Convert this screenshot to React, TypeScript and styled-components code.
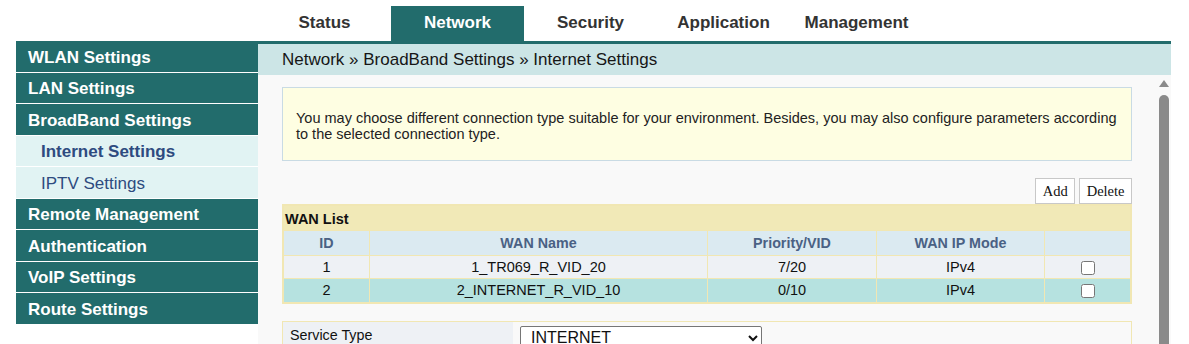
import React from "react";
import styled, { createGlobalStyle } from "styled-components";

const Global = createGlobalStyle`
  html, body { margin: 0; padding: 0; overflow: hidden; background: #fff; }
  body { font-family: "Liberation Sans", Arial, sans-serif; }
  * { box-sizing: border-box; }
`;

const TEAL = "#226c6c";

const Page = styled.div`
  width: 1189px;
  height: 344px;
  overflow: hidden;
  display: flex;
  flex-direction: column;
`;

const TopBar = styled.div`
  display: flex;
  flex: none;
  height: 41px;
  padding: 6px 0 0 258px;
`;

const Tab = styled.div<{ $active?: boolean }>`
  width: 133px;
  height: 35px;
  display: flex;
  align-items: center;
  justify-content: center;
  padding-bottom: 1px;
  font-size: 17px;
  font-weight: bold;
  color: ${(p) => (p.$active ? "#fff" : "#333")};
  background: ${(p) => (p.$active ? TEAL : "transparent")};
`;

const Body = styled.div`
  flex: 1;
  display: flex;
  padding: 0 18px 0 16px;
  min-height: 0;
`;

const Sidebar = styled.div`
  width: 242px;
  flex: none;
  display: flex;
  flex-direction: column;
  gap: 1px;
`;

const NavItem = styled.div<{ $sub?: boolean; $active?: boolean }>`
  height: 30.5px;
  flex: none;
  display: flex;
  align-items: center;
  padding-top: 3px;
  font-size: 17px;
  padding-left: ${(p) => (p.$sub ? "25px" : "12px")};
  font-weight: ${(p) => (p.$sub && !p.$active ? "normal" : "bold")};
  background: ${(p) => (p.$sub ? "#e1f3f3" : TEAL)};
  color: ${(p) => (p.$sub ? "#2e4b80" : "#fff")};
`;

const Content = styled.div`
  flex: 1;
  display: flex;
  flex-direction: column;
  background: #f9f9f9;
  border-top: 3px solid ${TEAL};
  min-width: 0;
`;

const Breadcrumb = styled.div`
  height: 31px;
  flex: none;
  display: flex;
  align-items: center;
  padding-left: 24px;
  background: #cce5e6;
  font-size: 17px;
  color: #161616;
`;

const ScrollArea = styled.div`
  flex: 1;
  display: flex;
  min-height: 0;
  overflow: hidden;
`;

const Inner = styled.div`
  flex: 1;
  padding: 12px 24px 0 24px;
`;

const Track = styled.div`
  width: 16px;
  flex: none;
  display: flex;
  flex-direction: column;
  align-items: flex-start;
  padding: 5px 0 0 3px;
`;

const Arrow = styled.div`
  width: 0;
  height: 0;
  border-left: 5.5px solid transparent;
  border-right: 5.5px solid transparent;
  border-bottom: 7px solid #8a8a8a;
`;

const Thumb = styled.div`
  margin-top: 8px;
  width: 10px;
  flex: 1;
  background: #8a8a8a;
  border-radius: 5px 5px 0 0;
`;

const InfoBox = styled.div`
  height: 74px;
  border: 1px solid #c9dbe4;
  background: #fefee2;
  padding: 22px 13px 0 13px;
  font-size: 14.5px;
  line-height: 16px;
  color: #222;
`;

const ButtonRow = styled.div`
  display: flex;
  justify-content: flex-end;
  gap: 4px;
  margin-top: 17px;
`;

const Btn = styled.button`
  height: 26px;
  padding: 0 6.5px;
  border: 1px solid #c8c8c8;
  background: #fff;
  font-family: "Liberation Serif", "Times New Roman", serif;
  font-size: 14.5px;
  color: #111;
  border-radius: 0;
`;

const Table = styled.table`
  width: 849px;
  border-collapse: separate;
  border-spacing: 1px;
  padding: 1px;
  background: #f1e7b3;
  font-size: 14.5px;
  table-layout: fixed;
`;

const TitleCell = styled.td`
  height: 24px;
  padding: 1px 1px 0;
  background: #f1e9b7;
  font-weight: bold;
  color: #111;
`;

const HeadCell = styled.th`
  height: 23.5px;
  padding: 0;
  background: #dbeaf1;
  color: #4a6184;
  font-size: 14.3px;
  font-weight: bold;
  text-align: center;
`;

const Cell = styled.td<{ $alt?: boolean }>`
  height: 22.5px;
  padding: 0;
  text-align: center;
  color: #111;
  background: ${(p) => (p.$alt ? "#b6e2e0" : "#eef1f5")};
`;

const Check = styled.input`
  width: 14px;
  height: 14px;
  margin: 2px 0 0 0;
  vertical-align: top;
`;

const FormBox = styled.div`
  margin-top: 17px;
  border: 1px solid #f1e7b3;
  display: flex;
  height: 40px;
`;

const Label = styled.div`
  width: 230px;
  background: #eef1f5;
  font-size: 14.3px;
  color: #111;
  padding: 5px 0 0 7px;
`;

const Select = styled.select`
  margin: 4px 0 0 7px;
  width: 242px;
  height: 24px;
  font-family: "Liberation Sans", Arial, sans-serif;
  font-size: 16px;
  padding: 0 6px;
  background: #fff;
  color: #111;
  border: 1px solid #767676;
  border-radius: 2px;
`;

const tabs = ["Status", "Network", "Security", "Application", "Management"];

const nav: { label: string; sub?: boolean; active?: boolean }[] = [
  { label: "WLAN Settings" },
  { label: "LAN Settings" },
  { label: "BroadBand Settings" },
  { label: "Internet Settings", sub: true, active: true },
  { label: "IPTV Settings", sub: true },
  { label: "Remote Management" },
  { label: "Authentication" },
  { label: "VoIP Settings" },
  { label: "Route Settings" },
];

const rows = [
  { id: "1", name: "1_TR069_R_VID_20", vid: "7/20", mode: "IPv4" },
  { id: "2", name: "2_INTERNET_R_VID_10", vid: "0/10", mode: "IPv4" },
];

export default function App() {
  return (
    <Page>
      <Global />
      <TopBar>
        {tabs.map((t) => (
          <Tab key={t} $active={t === "Network"}>
            {t}
          </Tab>
        ))}
      </TopBar>
      <Body>
        <Sidebar>
          {nav.map((n) => (
            <NavItem key={n.label} $sub={n.sub} $active={n.active}>
              {n.label}
            </NavItem>
          ))}
        </Sidebar>
        <Content>
          <Breadcrumb>Network » BroadBand Settings » Internet Settings</Breadcrumb>
          <ScrollArea>
            <Inner>
              <InfoBox>
                You may choose different connection type suitable for your environment. Besides, you may also
                configure parameters according to the selected connection type.
              </InfoBox>
              <ButtonRow>
                <Btn>Add</Btn>
                <Btn>Delete</Btn>
              </ButtonRow>
              <Table>
                <colgroup>
                  <col style={{ width: 85 }} />
                  <col style={{ width: 337 }} />
                  <col style={{ width: 168 }} />
                  <col style={{ width: 167 }} />
                  <col style={{ width: 85 }} />
                </colgroup>
                <tbody>
                  <tr>
                    <TitleCell colSpan={5}>WAN List</TitleCell>
                  </tr>
                  <tr>
                    <HeadCell>ID</HeadCell>
                    <HeadCell>WAN Name</HeadCell>
                    <HeadCell>Priority/VID</HeadCell>
                    <HeadCell>WAN IP Mode</HeadCell>
                    <HeadCell></HeadCell>
                  </tr>
                  {rows.map((r, i) => (
                    <tr key={r.id}>
                      <Cell $alt={i === 1}>{r.id}</Cell>
                      <Cell $alt={i === 1}>{r.name}</Cell>
                      <Cell $alt={i === 1}>{r.vid}</Cell>
                      <Cell $alt={i === 1}>{r.mode}</Cell>
                      <Cell $alt={i === 1}>
                        <Check type="checkbox" />
                      </Cell>
                    </tr>
                  ))}
                </tbody>
              </Table>
              <FormBox>
                <Label>Service Type</Label>
                <Select defaultValue="INTERNET">
                  <option>INTERNET</option>
                  <option>TR069</option>
                  <option>TR069_INTERNET</option>
                  <option>Other</option>
                </Select>
              </FormBox>
            </Inner>
            <Track>
              <Arrow />
              <Thumb />
            </Track>
          </ScrollArea>
        </Content>
      </Body>
    </Page>
  );
}
